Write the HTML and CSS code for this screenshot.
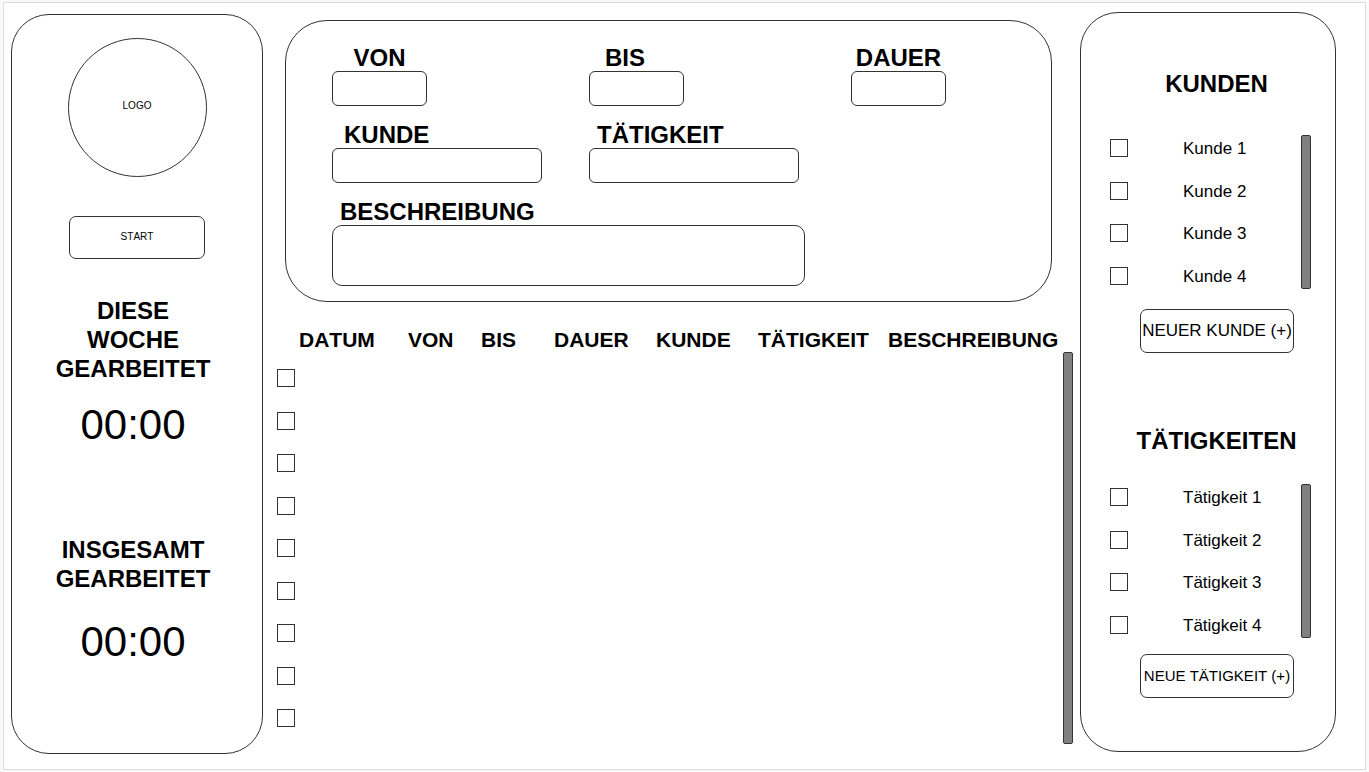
FILE: index.html
```html
<!DOCTYPE html>
<html lang="de">
<head>
<meta charset="utf-8">
<title>Zeiterfassung</title>
<meta name="viewport" content="width=device-width, initial-scale=1">
<link rel="stylesheet" href="styles.css">
</head>
<body>
<div class="canvas">
  <aside class="panel timer">
    <div class="logo">LOGO</div>
    <button class="button button-start" type="button">START</button>
    <section class="stat">
      <h2 class="heading">DIESE<br>WOCHE<br>GEARBEITET</h2>
      <p class="clock clock-week">00:00</p>
    </section>
    <section class="stat stat-total">
      <h2 class="heading">INSGESAMT<br>GEARBEITET</h2>
      <p class="clock clock-total">00:00</p>
    </section>
  </aside>

  <main class="main">
    <form class="entry">
      <div class="field field-short">
        <label class="label label-center" for="von">VON</label>
        <input class="box" id="von" type="text">
      </div>
      <div class="field field-short">
        <label class="label label-wide" for="bis">BIS</label>
        <input class="box" id="bis" type="text">
      </div>
      <div class="field field-short">
        <label class="label label-center" for="dauer">DAUER</label>
        <input class="box" id="dauer" type="text">
      </div>
      <div class="field field-medium">
        <label class="label" for="kunde">KUNDE</label>
        <input class="box" id="kunde" type="text">
      </div>
      <div class="field field-medium">
        <label class="label label-narrow" for="taetigkeit">TÄTIGKEIT</label>
        <input class="box" id="taetigkeit" type="text">
      </div>
      <div class="field field-long">
        <label class="label label-narrow" for="beschreibung">BESCHREIBUNG</label>
        <textarea class="box box-area" id="beschreibung"></textarea>
      </div>
    </form>

    <section class="records">
      <table class="table">
        <colgroup>
          <col class="col-check"><col class="col-date"><col class="col-time"><col class="col-time">
          <col class="col-name"><col class="col-name"><col class="col-task"><col class="col-text">
        </colgroup>
        <thead>
          <tr><td></td><th scope="col">DATUM</th><th scope="col">VON</th><th scope="col">BIS</th><th scope="col">DAUER</th><th scope="col">KUNDE</th><th scope="col">TÄTIGKEIT</th><th scope="col">BESCHREIBUNG</th></tr>
        </thead>
        <tbody>
          <tr><td><input class="check" type="checkbox" aria-label="Eintrag 1"></td><td colspan="7"></td></tr>
          <tr><td><input class="check" type="checkbox" aria-label="Eintrag 2"></td><td colspan="7"></td></tr>
          <tr><td><input class="check" type="checkbox" aria-label="Eintrag 3"></td><td colspan="7"></td></tr>
          <tr><td><input class="check" type="checkbox" aria-label="Eintrag 4"></td><td colspan="7"></td></tr>
          <tr><td><input class="check" type="checkbox" aria-label="Eintrag 5"></td><td colspan="7"></td></tr>
          <tr><td><input class="check" type="checkbox" aria-label="Eintrag 6"></td><td colspan="7"></td></tr>
          <tr><td><input class="check" type="checkbox" aria-label="Eintrag 7"></td><td colspan="7"></td></tr>
          <tr><td><input class="check" type="checkbox" aria-label="Eintrag 8"></td><td colspan="7"></td></tr>
          <tr><td><input class="check" type="checkbox" aria-label="Eintrag 9"></td><td colspan="7"></td></tr>
        </tbody>
      </table>
      <div class="scrollbar scrollbar-records"></div>
    </section>
  </main>

  <aside class="panel lists">
    <section class="group">
      <h2 class="heading">KUNDEN</h2>
      <div class="scroller">
        <ul class="options">
          <li class="option"><input class="check" type="checkbox" id="k1"><label for="k1">Kunde 1</label></li>
          <li class="option"><input class="check" type="checkbox" id="k2"><label for="k2">Kunde 2</label></li>
          <li class="option"><input class="check" type="checkbox" id="k3"><label for="k3">Kunde 3</label></li>
          <li class="option"><input class="check" type="checkbox" id="k4"><label for="k4">Kunde 4</label></li>
        </ul>
        <div class="scrollbar"></div>
      </div>
      <button class="button button-customer" type="button">NEUER KUNDE (+)</button>
    </section>
    <section class="group group-tasks">
      <h2 class="heading">TÄTIGKEITEN</h2>
      <div class="scroller">
        <ul class="options">
          <li class="option"><input class="check" type="checkbox" id="t1"><label for="t1">Tätigkeit 1</label></li>
          <li class="option"><input class="check" type="checkbox" id="t2"><label for="t2">Tätigkeit 2</label></li>
          <li class="option"><input class="check" type="checkbox" id="t3"><label for="t3">Tätigkeit 3</label></li>
          <li class="option"><input class="check" type="checkbox" id="t4"><label for="t4">Tätigkeit 4</label></li>
        </ul>
        <div class="scrollbar"></div>
      </div>
      <button class="button button-task" type="button">NEUE TÄTIGKEIT (+)</button>
    </section>
  </aside>
</div>
</body>
</html>
```
FILE: styles.css
```css
:root {
  --line: #333;
}

* {
  box-sizing: border-box;
}

body {
  margin: 0;
  padding: 2px 3px;
  background: #f9f9f9;
  color: #000;
  font-family: "Liberation Sans", Arial, sans-serif;
  font-kerning: none;
}

.canvas {
  display: grid;
  grid-template-columns: 252px minmax(0, 1fr) 256px;
  min-height: calc(100vh - 4px);
  padding: 9px 29px 15px 7px;
  border: 1px solid #ddd;
  background: #fff;
}

.panel {
  display: flex;
  flex-direction: column;
  border: 1px solid var(--line);
  border-radius: 38px;
}

.heading {
  margin: 0;
  font-size: 24px;
  line-height: 29px;
  text-align: center;
}

.button {
  padding: 0 0 2px;
  border: 1px solid var(--line);
  border-radius: 7px;
  background: #fff;
  color: inherit;
  font-family: inherit;
  font-kerning: inherit;
  white-space: nowrap;
}

.check {
  flex: none;
  display: block;
  width: 18px;
  height: 18px;
  margin: 0;
  border: 1px solid var(--line);
  background: #fff;
  appearance: none;
}

.check:checked {
  background: #808080;
}

.scrollbar {
  flex: none;
  width: 10px;
  border: 1px solid var(--line);
  border-radius: 2px;
  background: #808080;
}

/* Timer panel */

.timer {
  align-items: center;
  margin-top: 2px;
  padding-top: 23px;
}

.logo {
  display: flex;
  align-items: center;
  justify-content: center;
  width: 139px;
  height: 139px;
  padding-bottom: 4px;
  border: 1px solid var(--line);
  border-radius: 50%;
  font-size: 10px;
}

.button-start {
  width: 136px;
  height: 43px;
  margin-top: 39px;
  font-size: 10px;
}

.stat {
  margin-top: 37px;
  padding-right: 8px;
}

.stat-total {
  margin-top: 86px;
}

.clock {
  margin: 0;
  font-size: 42px;
  line-height: 48px;
  text-align: center;
}

.clock-week {
  margin-top: 18px;
}

.clock-total {
  margin-top: 25px;
}

/* Entry form */

.main {
  display: flex;
  flex-direction: column;
  padding-top: 8px;
}

.entry {
  display: grid;
  grid-template-columns: 257fr 262fr 200fr;
  row-gap: 16px;
  margin: 0 28px 0 22px;
  padding: 24px 0 15px 46px;
  border: 1px solid var(--line);
  border-radius: 42px;
}

.field {
  display: flex;
  flex-direction: column;
}

.field-short {
  width: 95px;
}

.field-medium {
  width: 210px;
}

.field-long {
  grid-column: 1 / 3;
  padding-right: 46px;
}

.label {
  padding-left: 12px;
  font-size: 24px;
  font-weight: bold;
  line-height: 26px;
}

.label-center {
  padding-left: 0;
  text-align: center;
}

.label-wide {
  padding-left: 16px;
}

.label-narrow {
  padding-left: 8px;
}

.box {
  width: 100%;
  height: 35px;
  padding: 0 8px;
  border: 1px solid var(--line);
  border-radius: 6px;
  background: #fff;
  font: 17px "Liberation Sans", Arial, sans-serif;
}

.box-area {
  height: 61px;
  padding: 8px;
  border-radius: 10px;
  resize: none;
}

/* Records */

.records {
  display: flex;
  flex: 1;
  align-items: flex-start;
  padding: 26px 7px 10px 14px;
}

.table {
  flex: 1;
  table-layout: fixed;
  width: 100%;
  border-collapse: collapse;
}

.table th,
.table td {
  padding: 0;
}

.table thead tr {
  height: 29px;
}

.table th {
  padding-left: 1px;
  font-size: 21px;
  line-height: 24px;
  text-align: left;
  vertical-align: top;
}

.table tbody tr {
  height: 42px;
}

.table tbody tr:nth-child(even) {
  height: 43px;
}

.col-check {
  width: 21px;
}

.col-date {
  width: 109px;
}

.col-time {
  width: 73px;
}

.col-name {
  width: 102px;
}

.col-task {
  width: 130px;
}

.col-text {
  width: 176px;
}

.scrollbar-records {
  align-self: stretch;
  margin-top: 24px;
}

/* Customer and task lists */

.lists {
  margin-bottom: 2px;
  padding: 56px 24px 0 29px;
}

.group {
  display: flex;
  flex-direction: column;
}

.group .heading {
  padding-left: 12px;
}

.group-tasks {
  margin-top: 73px;
}

.scroller {
  display: flex;
  justify-content: space-between;
  margin: 29px 0 12px;
}

.group-tasks .scroller {
  margin: 21px 0 8px;
}

.scroller .scrollbar {
  margin: 8px 0;
}

.options {
  margin: 0;
  padding: 0;
  list-style: none;
}

.option {
  display: flex;
  gap: 55px;
  align-items: center;
  height: 42px;
  font-size: 17px;
  line-height: 20px;
}

.option label {
  padding-top: 2px;
}

.option:nth-child(even) {
  height: 43px;
}

.group .button {
  width: 154px;
  height: 44px;
  margin-left: 30px;
}

.group .button-customer {
  padding-bottom: 0;
  font-size: 17px;
}

.button-task {
  font-size: 15px;
}
```
